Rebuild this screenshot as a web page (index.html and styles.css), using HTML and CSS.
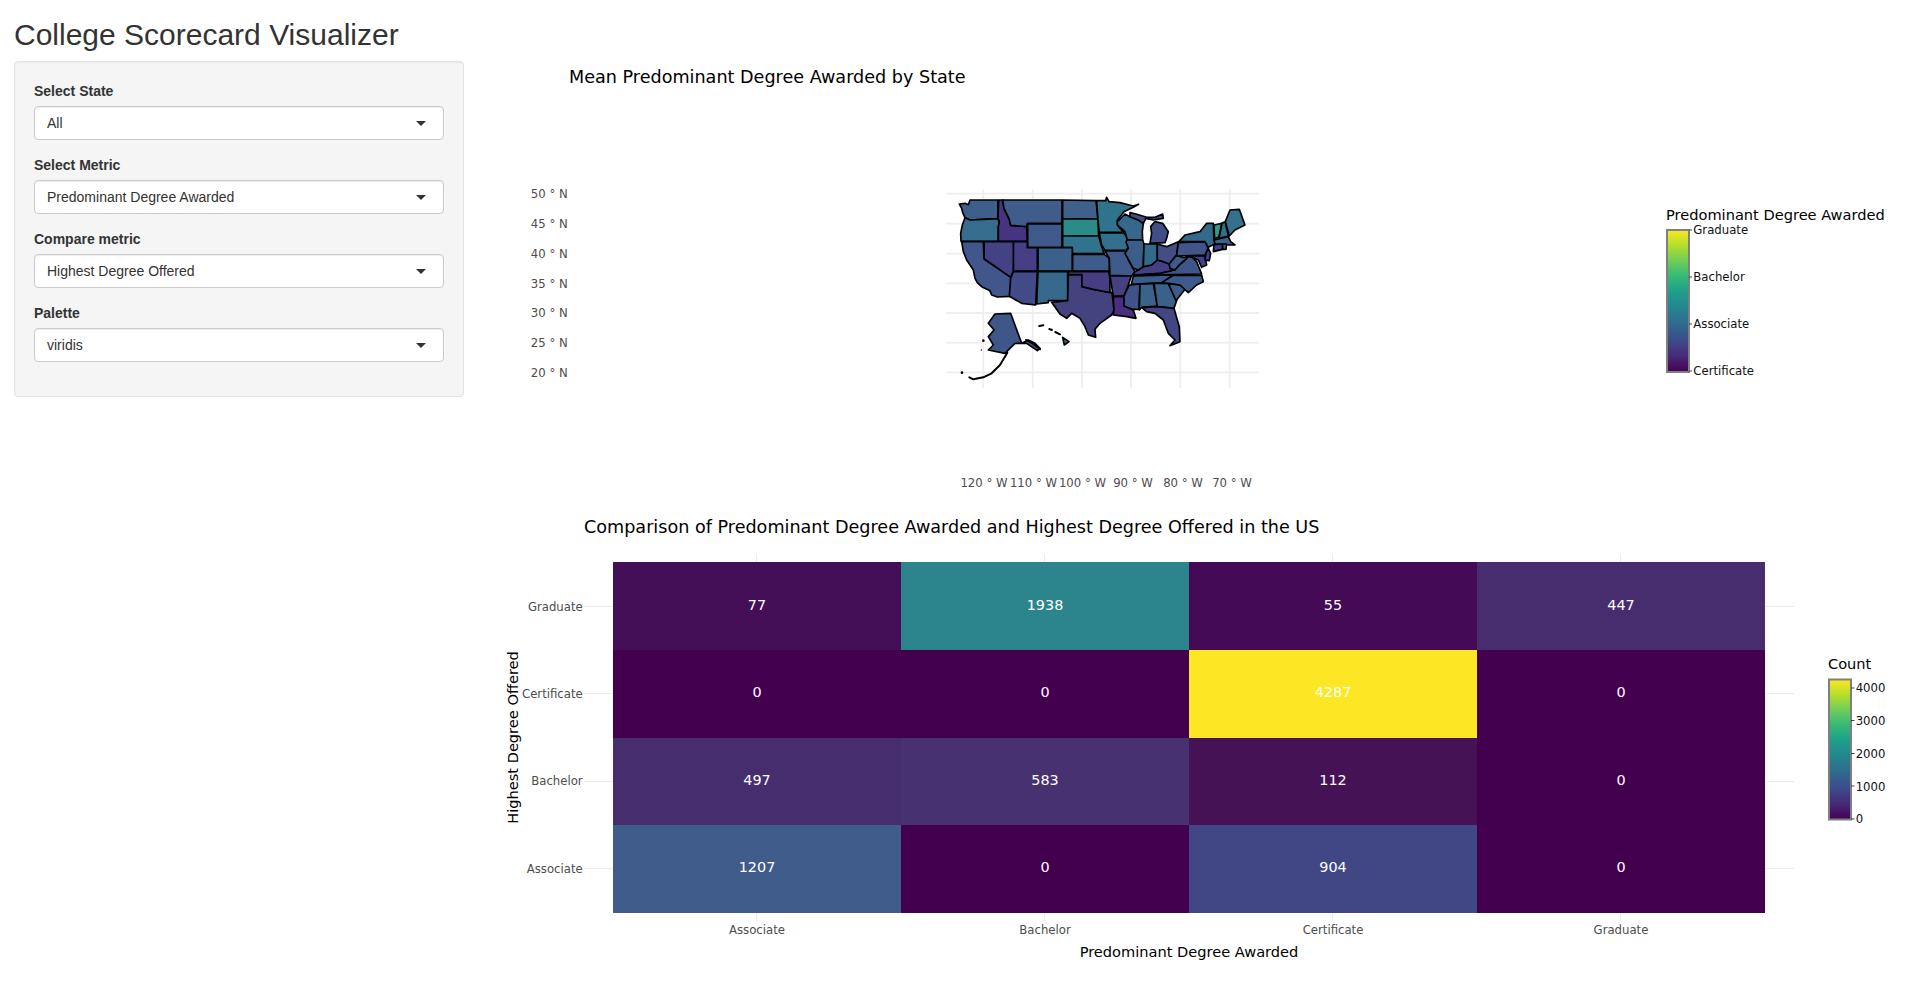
FILE: index.html
```html
<!DOCTYPE html>
<html lang="en">
  <head>
    <meta charset="UTF-8" />
    <title>College Scorecard Visualizer</title>
    <link rel="stylesheet" href="styles.css">
  </head>
  <body>
    <h2 class="page-title">College Scorecard Visualizer</h2>

    <div class="layout">
      <div class="sidebar">
        <div class="form-group">
          <label>Select State</label>
          <div class="select-box">All</div>
        </div>
        <div class="form-group">
          <label>Select Metric</label>
          <div class="select-box">Predominant Degree Awarded</div>
        </div>
        <div class="form-group">
          <label>Compare metric</label>
          <div class="select-box">Highest Degree Offered</div>
        </div>
        <div class="form-group">
          <label>Palette</label>
          <div class="select-box">viridis</div>
        </div>
      </div>

      <div class="main">
        <!-- map plot, viewBox uses page coordinates -->
        <svg class="plot plot-map" viewBox="480 61 1439 440">
          <defs>
            <linearGradient id="viridis" x1="0" y1="1" x2="0" y2="0">
              <stop offset="0" stop-color="#440154" />
              <stop offset="0.11" stop-color="#482878" />
              <stop offset="0.22" stop-color="#3e4a89" />
              <stop offset="0.33" stop-color="#31688e" />
              <stop offset="0.44" stop-color="#26828e" />
              <stop offset="0.56" stop-color="#1f9e89" />
              <stop offset="0.67" stop-color="#35b779" />
              <stop offset="0.78" stop-color="#6dcd59" />
              <stop offset="0.89" stop-color="#b4de2c" />
              <stop offset="1" stop-color="#fde725" />
            </linearGradient>
          </defs>

          <text class="plot-title" x="569" y="82.5">Mean Predominant Degree Awarded by State</text>

          <g class="grid-thick">
            <line x1="946" x2="1259" y1="193.7" y2="193.7" />
            <line x1="946" x2="1259" y1="223.7" y2="223.7" />
            <line x1="946" x2="1259" y1="253.7" y2="253.7" />
            <line x1="946" x2="1259" y1="283.3" y2="283.3" />
            <line x1="946" x2="1259" y1="313" y2="313" />
            <line x1="946" x2="1259" y1="342.7" y2="342.7" />
            <line x1="946" x2="1259" y1="372.3" y2="372.3" />
            <line x1="983.3" x2="983.3" y1="189" y2="388" />
            <line x1="1032.7" x2="1032.7" y1="189" y2="388" />
            <line x1="1082" x2="1082" y1="189" y2="388" />
            <line x1="1131" x2="1131" y1="189" y2="388" />
            <line x1="1180.3" x2="1180.3" y1="189" y2="388" />
            <line x1="1229.7" x2="1229.7" y1="189" y2="388" />
          </g>

          <g class="tick-label end">
            <text x="567.7" y="198">50 ° N</text>
            <text x="567.7" y="228">45 ° N</text>
            <text x="567.7" y="258">40 ° N</text>
            <text x="567.7" y="288">35 ° N</text>
            <text x="567.7" y="317">30 ° N</text>
            <text x="567.7" y="347">25 ° N</text>
            <text x="567.7" y="377">20 ° N</text>
          </g>
          <g class="tick-label middle">
            <text x="984" y="487">120 ° W</text>
            <text x="1033.5" y="487">110 ° W</text>
            <text x="1082.5" y="487">100 ° W</text>
            <text x="1133" y="487">90 ° W</text>
            <text x="1183" y="487">80 ° W</text>
            <text x="1232" y="487">70 ° W</text>
          </g>

          <!-- states, traced at 3x -->
          <g class="states" transform="translate(920 170) scale(0.3333)">
            <polygon fill="#3e5f8b" points="118,102 135,100 145,104 150,90 234,90 234,146 190,148 150,150 135,143 128,128 125,115" />
            <polygon fill="#356d8c" points="135,143 150,150 190,148 234,146 238,155 235,170 235,214 123,214 122,190 127,165" />
            <polygon fill="#473480" points="236,90 248,90 252,115 268,148 272,166 320,170 322,214 235,214 235,170 238,155 234,146" />
            <polygon fill="#3f5c8a" points="248,90 426,90 426,160 322,160 320,170 272,166 268,148 252,115" />
            <polygon fill="#3e608b" points="428,90 528,92 534,147 428,147" />
            <polygon fill="#2a8b88" points="428,147 534,147 536,198 428,198" />
            <polygon fill="#3f5a8a" points="323,162 426,162 426,233 323,233" />
            <polygon fill="#30738d" points="428,198 536,198 545,230 553,251 457,251 457,233 428,233" />
            <polygon fill="#3b618b" points="354,233 457,233 457,303 354,303" />
            <polygon fill="#463f84" points="280,215 322,215 322,233 352,233 352,303 280,303" />
            <polygon fill="#444285" points="192,215 280,215 280,303 272,322 192,267" />
            <polygon fill="#41578b" points="125,215 190,215 192,267 272,322 272,379 232,381 215,375 210,362 185,350 172,338 165,325 160,300 140,270 130,245" />
            <polygon fill="#424a87" points="280,305 352,305 347,405 305,400 268,379 272,325" />
            <polygon fill="#36698c" points="354,305 443,305 443,392 385,392 385,398 350,402" />
            <polygon fill="#3e5c8a" points="458,253 553,253 568,265 568,303 458,303" />
            <polygon fill="#444380" points="445,314 486,314 486,350 520,358 576,368 580,400 582,420 575,435 540,460 525,478 527,502 505,495 495,470 480,445 455,430 440,445 420,432 395,397 443,392" />
            <polygon fill="#463d83" points="445,305 566,305 570,325 570,368 520,358 486,350 486,314 445,314" />
            <polygon fill="#2f738d" points="530,92 557,92 560,82 567,95 600,98 640,108 656,103 640,112 612,125 592,150 595,170 612,187 538,187 534,150" />
            <polygon fill="#33708d" points="538,189 612,189 630,215 620,240 555,241 545,225" />
            <polygon fill="#3f5a8a" points="555,243 618,243 625,270 645,305 635,318 570,316 568,265" />
            <polygon fill="#46407f" points="570,318 634,318 625,345 612,378 580,378 578,367" />
            <polygon fill="#4a2f80" points="580,380 612,380 612,408 640,420 648,445 620,440 580,435 582,420" />
            <polygon fill="#3f538a" points="628,345 660,342 657,418 638,418 612,408 612,378" />
            <polygon fill="#3a628b" points="660,342 700,340 712,408 665,412 658,420" />
            <polygon fill="#3a618b" points="702,340 745,340 770,392 762,415 712,410" />
            <polygon fill="#444583" points="665,413 712,410 762,415 778,470 780,515 750,527 765,510 745,490 730,450 705,430 680,425" />
            <polygon fill="#3d5a89" points="745,340 780,345 800,352 768,392" />
            <polygon fill="#3e598b" points="722,338 760,316 845,316 850,335 830,345 805,368 780,345 745,340" />
            <polygon fill="#3c5c8b" points="634,343 640,318 760,315 725,338" />
            <polygon fill="#454085" points="655,300 670,290 695,285 712,270 730,275 748,282 750,295 765,300 720,310 638,316 645,305" />
            <polygon fill="#35688c" points="592,155 615,132 630,140 655,150 670,160 667,185 668,210 622,210 615,185 592,165" />
            <polygon fill="#424f87" points="630,128 648,132 680,142 705,142 728,132 730,145 700,150 678,145 670,160 655,150 630,140" />
            <polygon fill="#3c5d8a" points="622,210 668,210 672,222 670,290 655,300 640,295 615,250 625,235 618,215" />
            <polygon fill="#35698c" points="672,222 712,222 712,270 695,285 670,290" />
            <polygon fill="#434e87" points="712,222 740,230 775,215 770,255 748,282 730,275 712,270" />
            <polygon fill="#424f87" points="705,155 728,160 745,185 740,205 735,218 690,220 695,190 692,170" />
            <polygon fill="#3f5689" points="640,316 720,310 765,300 775,288 795,270 810,255 830,275 845,312" />
            <polygon fill="#3c5c8a" points="748,282 770,255 775,258 792,263 810,255 795,270 775,288 765,300 750,295" />
            <polygon fill="#40568a" points="775,218 855,215 865,235 855,255 770,258" />
            <polygon fill="#45408a" points="800,258 855,257 860,285 845,292 835,270 815,262" />
            <polygon fill="#33698c" points="777,215 795,195 840,185 860,160 880,160 882,210 888,220 865,232 855,215" />
            <polygon fill="#27a085" points="882,165 906,160 897,200 884,208" />
            <polygon fill="#336f8d" points="906,160 915,155 926,198 897,205" />
            <polygon fill="#35708d" points="916,155 930,120 958,118 975,165 945,180 928,198" />
            <polygon fill="#3a628b" points="882,210 925,200 932,215 945,225 925,225 885,222" />
            <polygon fill="#433f85" points="882,224 908,222 908,238 880,245" />
            <polygon fill="#3a628b" points="908,222 920,222 918,238 908,238" />
            <polygon fill="#45408a" points="865,235 872,250 868,272 855,270 858,250" />
            <!-- Alaska and Hawaii -->
            <polygon fill="#3f5689" points="225,432 272,430 305,520 325,510 345,520 360,535 352,542 320,520 285,520 255,550 205,540 220,525 205,500 222,480 205,460" />
            <polyline class="coast" points="262,548 240,585 215,610 190,622 160,628 148,622" />
            <polyline class="coast" points="318,510 340,522 360,538" />
            <polygon fill="#33708d" points="428,502 447,515 433,525" />
            <polyline class="coast" points="358,468 370,466" />
            <polyline class="coast" points="388,477 396,480" />
            <polyline class="coast" points="406,486 420,493" />
            <circle class="isle" cx="126" cy="608" r="4" />
            <circle class="isle" cx="190" cy="512" r="4" />
            <circle class="isle" cx="184" cy="540" r="2" />
            <circle class="isle" cx="210" cy="365" r="2" />
          </g>

          <text class="legend-title" x="1666" y="220">Predominant Degree Awarded</text>
          <rect class="colorbar" x="1667" y="230" width="22" height="142" />
          <g class="legend-tick">
            <line x1="1689" x2="1692" y1="230" y2="230" />
            <line x1="1689" x2="1692" y1="277" y2="277" />
            <line x1="1689" x2="1692" y1="324" y2="324" />
            <line x1="1689" x2="1692" y1="371" y2="371" />
          </g>
          <g class="legend-label">
            <text x="1693.3" y="233.7">Graduate</text>
            <text x="1693.3" y="281">Bachelor</text>
            <text x="1693.3" y="328">Associate</text>
            <text x="1693.3" y="375">Certificate</text>
          </g>
        </svg>

        <!-- heatmap plot -->
        <svg class="plot plot-heat" viewBox="480 501 1439 481">
          <text class="plot-title" x="584" y="533">Comparison of Predominant Degree Awarded and Highest Degree Offered in the US</text>

          <g class="grid-thin">
            <line x1="584" x2="613" y1="606.5" y2="606.5" />
            <line x1="584" x2="613" y1="693.5" y2="693.5" />
            <line x1="584" x2="613" y1="781.5" y2="781.5" />
            <line x1="584" x2="613" y1="868.5" y2="868.5" />
            <line x1="1765" x2="1794" y1="606.5" y2="606.5" />
            <line x1="1765" x2="1794" y1="693.5" y2="693.5" />
            <line x1="1765" x2="1794" y1="781.5" y2="781.5" />
            <line x1="1765" x2="1794" y1="868.5" y2="868.5" />
            <line x1="756.5" x2="756.5" y1="554" y2="921" />
            <line x1="1044.5" x2="1044.5" y1="554" y2="921" />
            <line x1="1332.5" x2="1332.5" y1="554" y2="921" />
            <line x1="1620.5" x2="1620.5" y1="554" y2="921" />
          </g>

          <rect fill="#440f56" x="613" y="562" width="288" height="88" />
          <rect fill="#2c848c" x="901" y="562" width="288" height="88" />
          <rect fill="#440a55" x="1189" y="562" width="288" height="88" />
          <rect fill="#472d6e" x="1477" y="562" width="288" height="88" />
          <rect fill="#43004f" x="613" y="650" width="288" height="88" />
          <rect fill="#43004f" x="901" y="650" width="288" height="88" />
          <rect fill="#fde725" x="1189" y="650" width="288" height="88" />
          <rect fill="#43004f" x="1477" y="650" width="288" height="88" />
          <rect fill="#462e6e" x="613" y="738" width="288" height="87" />
          <rect fill="#473170" x="901" y="738" width="288" height="87" />
          <rect fill="#451256" x="1189" y="738" width="288" height="87" />
          <rect fill="#43004f" x="1477" y="738" width="288" height="87" />
          <rect fill="#3f5c8a" x="613" y="825" width="288" height="88" />
          <rect fill="#43004f" x="901" y="825" width="288" height="88" />
          <rect fill="#414785" x="1189" y="825" width="288" height="88" />
          <rect fill="#43004f" x="1477" y="825" width="288" height="88" />

          <g class="cell-label">
            <text x="757" y="610">77</text>
            <text x="1045" y="610">1938</text>
            <text x="1333" y="610">55</text>
            <text x="1621" y="610">447</text>
            <text x="757" y="697">0</text>
            <text x="1045" y="697">0</text>
            <text x="1333" y="697">4287</text>
            <text x="1621" y="697">0</text>
            <text x="757" y="785">497</text>
            <text x="1045" y="785">583</text>
            <text x="1333" y="785">112</text>
            <text x="1621" y="785">0</text>
            <text x="757" y="872">1207</text>
            <text x="1045" y="872">0</text>
            <text x="1333" y="872">904</text>
            <text x="1621" y="872">0</text>
          </g>

          <g class="tick-label end">
            <text x="582.7" y="610.5">Graduate</text>
            <text x="582.7" y="697.5">Certificate</text>
            <text x="582.7" y="784.5">Bachelor</text>
            <text x="582.7" y="872.5">Associate</text>
          </g>
          <g class="tick-label middle">
            <text x="757" y="933.5">Associate</text>
            <text x="1045" y="933.5">Bachelor</text>
            <text x="1333" y="933.5">Certificate</text>
            <text x="1621" y="933.5">Graduate</text>
          </g>

          <text class="axis-title middle" x="1189" y="957">Predominant Degree Awarded</text>
          <text class="axis-title middle" transform="translate(518 737.5) rotate(-90)">Highest Degree Offered</text>

          <text class="legend-title" x="1828" y="669.3">Count</text>
          <rect class="colorbar" x="1829" y="679.5" width="22" height="140" />
          <g class="legend-tick">
            <line x1="1851" x2="1854.5" y1="688" y2="688" />
            <line x1="1851" x2="1854.5" y1="720.5" y2="720.5" />
            <line x1="1851" x2="1854.5" y1="753.5" y2="753.5" />
            <line x1="1851" x2="1854.5" y1="786" y2="786" />
            <line x1="1851" x2="1854.5" y1="819" y2="819" />
          </g>
          <g class="legend-label">
            <text x="1855.7" y="691.7">4000</text>
            <text x="1855.7" y="724.7">3000</text>
            <text x="1855.7" y="757.7">2000</text>
            <text x="1855.7" y="790.7">1000</text>
            <text x="1855.7" y="822.7">0</text>
          </g>
        </svg>
      </div>
    </div>
  </body>
</html>
```

FILE: styles.css
```css
body {
  font-family: "Liberation Sans", Arial, sans-serif;
  font-size: 14px;
  line-height: 20px;
  color: #333333;
  background: #ffffff;
  margin: 0;
  overflow: hidden;
}

.page-title {
  font-size: 30px;
  font-weight: 500;
  line-height: 33px;
  margin: 18px 0 10px 14px;
}

.layout {
  display: flex;
}

.sidebar {
  width: 450px;
  margin-left: 14px;
  padding: 19px;
  box-sizing: border-box;
  background: #f5f5f5;
  border: 1px solid #e3e3e3;
  border-radius: 4px;
  box-shadow: inset 0 1px 1px rgba(0, 0, 0, 0.05);
  align-self: flex-start;
}

.form-group {
  margin-bottom: 15px;
}

.form-group label {
  display: block;
  font-weight: 700;
  margin-bottom: 5px;
}

.select-box {
  position: relative;
  height: 34px;
  padding: 6px 12px;
  box-sizing: border-box;
  background: #ffffff;
  border: 1px solid #cccccc;
  border-radius: 4px;
  box-shadow: inset 0 1px 1px rgba(0, 0, 0, 0.075);
}

/* caret of the dropdown */
.select-box::after {
  content: "";
  position: absolute;
  top: 14px;
  right: 17px;
  border-style: solid;
  border-width: 5px 5px 0 5px;
  border-color: #333333 transparent transparent transparent;
}

.main {
  margin-left: 16px;
  width: 1439px;
}

.plot {
  display: block;
  font-family: "DejaVu Sans", Verdana, sans-serif;
}

.plot-map {
  width: 1439px;
  height: 440px;
}

.plot-heat {
  width: 1439px;
  height: 481px;
}

.plot-title {
  font-size: 17.6px;
  fill: #000000;
}

.tick-label {
  font-size: 11.7px;
  fill: #4d4d4d;
}

.end {
  text-anchor: end;
}

.middle {
  text-anchor: middle;
}

.axis-title,
.legend-title {
  font-size: 14.6px;
  fill: #000000;
}

.legend-label {
  font-size: 11.7px;
  fill: #111111;
}

.legend-tick line {
  stroke: #444444;
  stroke-width: 1;
}

.colorbar {
  fill: url(#viridis);
  stroke: #7f7f7f;
  stroke-width: 2;
}

.cell-label {
  font-size: 14.4px;
  fill: #ffffff;
  text-anchor: middle;
}

.grid-thick line {
  stroke: #eeeeee;
  stroke-width: 1.8;
}

.grid-thin line {
  stroke: #ebebeb;
  stroke-width: 1;
}

.states polygon {
  stroke: #000000;
  stroke-width: 5;
  stroke-linejoin: round;
}

.states .coast {
  fill: none;
  stroke: #000000;
  stroke-width: 6;
  stroke-linejoin: round;
  stroke-linecap: round;
}

.states .isle {
  fill: #000000;
}
```
